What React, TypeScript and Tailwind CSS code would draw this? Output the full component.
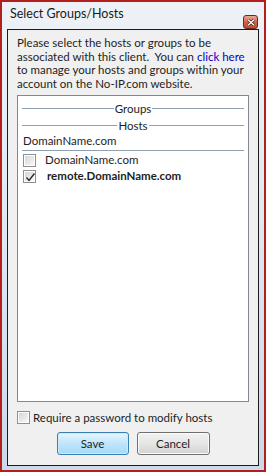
import React from "react";

function Check({ checked }: { checked?: boolean }) {
  return (
    <div className="relative w-[13px] h-[13px] border border-[#8f8f8f] bg-white shrink-0">
      <div className="absolute inset-[1px] bg-gradient-to-br from-[#d6d6d6] to-[#f8f8f8]" />
      {checked && (
        <svg className="absolute left-[1px] top-[1px]" width="11" height="11" viewBox="0 0 11 11">
          <path d="M1.5 5.5 L4 8.5 L9.5 1.5" fill="none" stroke="#2a2a2a" strokeWidth="1.4" />
        </svg>
      )}
    </div>
  );
}

function Header({ label }: { label: string }) {
  return (
    <div className="h-[17px] flex items-center">
      <div className="flex-1 h-px bg-[#8ea1b2]" />
      <span className="px-[1px] leading-none">{label}</span>
      <div className="flex-1 h-px bg-[#8ea1b2]" />
    </div>
  );
}

export default function App() {
  return (
    <div className="w-[266px] h-[473px] bg-white font-['Lato',sans-serif] text-[11.5px] text-[#1e1e1e]">
      <div className="w-[266px] h-[472px] border-2 border-[#b3201c] bg-gradient-to-b from-[#eef2f7] via-[#dfe7f1] to-[#cbd9ea] flex flex-col">
        <div className="h-[27px] flex items-start pl-[8px] pr-[5px] pt-[4px] relative">
          <span className="text-[12.5px] leading-[16px] text-[#1a1a1a]">Select Groups/Hosts</span>
          <div className="absolute left-[241px] top-[13px] w-[15px] h-[14px] rounded-[3px] border border-[#6b2a20] bg-gradient-to-b from-[#e8a89a] via-[#d2634c] to-[#c24a2f] flex items-center justify-center">
            <svg width="8" height="7" viewBox="0 0 8 7">
              <path d="M1 0.8 L7 6.2 M7 0.8 L1 6.2" stroke="#3a1a14" strokeWidth="2.6" />
              <path d="M1 0.8 L7 6.2 M7 0.8 L1 6.2" stroke="#ffffff" strokeWidth="1.4" />
            </svg>
          </div>
        </div>
        <div className="mx-[5px] h-[437px] border border-[#1c1c1c] bg-[#f0f0f0] flex flex-col px-[9px] pt-[6px]">
          <div className="flex flex-col whitespace-pre">
            <div className="h-[13.5px] leading-[13.5px]">Please select the hosts or groups to be</div>
            <div className="h-[13.5px] leading-[13.5px] flex">
              <span>{"associated with this client.  You can "}</span>
              <span className="text-[#0000cc]">click here</span>
            </div>
            <div className="h-[13.5px] leading-[13.5px]">to manage your hosts and groups within your</div>
            <div className="h-[13.5px] leading-[13.5px]">account on the No-IP.com website.</div>
          </div>
          <div className="mt-[5px] h-[307px] border border-[#828790] bg-white flex flex-col px-[4px] pt-[4px]">
            <Header label="Groups" />
            <Header label="Hosts" />
            <div className="h-[13px] flex items-center pl-[1px] leading-none">DomainName.com</div>
            <div className="mt-[3px] h-px bg-[#8ea1b2]" />
            <div className="mt-[1px] h-[16px] flex items-center pl-[1px]">
              <Check />
              <span className="ml-[9px] leading-none">DomainName.com</span>
            </div>
            <div className="h-[16px] flex items-center pl-[1px]">
              <Check checked />
              <span className="ml-[11px] leading-none font-bold">remote.DomainName.com</span>
            </div>
          </div>
          <div className="mt-[9px] h-[13px] flex items-center">
            <Check />
            <span className="ml-[3px] leading-none">Require a password to modify hosts</span>
          </div>
          <div className="mt-[8px] flex justify-center gap-[8px]">
            <button className="w-[72px] h-[23px] rounded-[3px] border border-[#3c7fb1] bg-gradient-to-b from-[#eaf6fd] via-[#bee6fd] to-[#a7d9f5] shadow-[inset_0_0_0_1px_#c8ecfb] text-[11.5px] leading-none text-[#1e1e1e]">
              Save
            </button>
            <button className="w-[73px] h-[23px] rounded-[3px] border border-[#707070] bg-gradient-to-b from-[#f2f2f2] via-[#e6e6e6] to-[#d2d2d2] shadow-[inset_0_0_0_1px_#fbfbfb] text-[11.5px] leading-none text-[#1e1e1e]">
              Cancel
            </button>
          </div>
        </div>
      </div>
    </div>
  );
}
